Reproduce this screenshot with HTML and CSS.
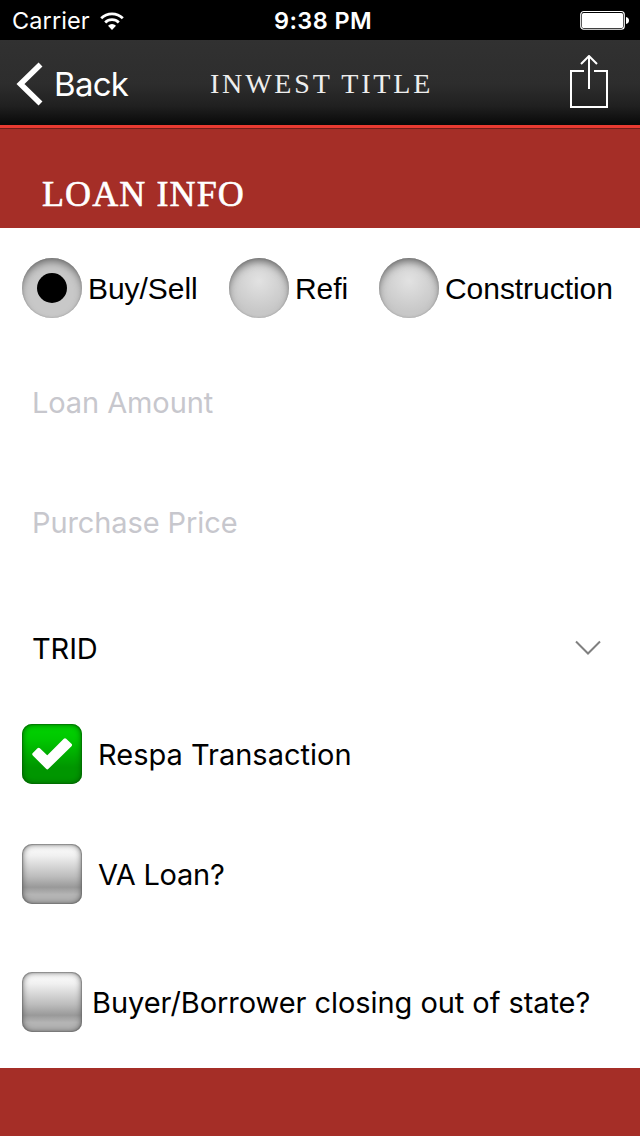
FILE: index.html
```html
<!DOCTYPE html>
<html lang="en">
<head>
<meta charset="utf-8">
<title>Inwest Title</title>
<link rel="stylesheet" href="styles.css">
</head>
<body>
<div class="status">
  <div class="carrier"><span>Carrier</span>
    <svg class="wifi" width="24" height="18" viewBox="0 0 24 18" fill="none" stroke="#fff" stroke-width="2.800"><path d="M1.200 6.200a15.600 15.600 0 0 1 21.600 0M5.200 10.400a9.800 9.800 0 0 1 13.600 0"/><path d="M8 13.700a5.800 5.800 0 0 1 8 0L12 18z" fill="#fff" stroke="none"/></svg>
  </div>
  <time class="clock">9:38 PM</time>
  <svg class="battery" width="50" height="20" viewBox="0 0 50 20"><rect x=".75" y="1.500" width="43.500" height="17.750" rx="3" fill="none" stroke="#fff" stroke-width="1.200"/><rect x="2" y="3" width="41" height="15" rx="1.500" fill="#fff"/><path d="M46 7c4 .5 4 6.500 0 7z" fill="#fff"/></svg>
</div>
<header class="nav">
  <a class="back"><svg width="27" height="44" viewBox="0 0 27 44" fill="none" stroke="#fff" stroke-width="5.600"><path d="M24.500 2.500L4.500 22l20 19.500"/></svg><span>Back</span></a>
  <h1 class="title">INWEST TITLE</h1>
  <svg class="share" width="40" height="54" viewBox="0 0 40 54" fill="none" stroke="#fff" stroke-width="2"><path d="M14 16H1v36h36V16H24M19 34V2M11 9l8-8 8 8"/></svg>
</header>
<section class="banner"><h2>LOAN INFO</h2></section>
<main class="form">
  <div class="radios">
    <label class="radio buy"><i class="knob on"></i><span>Buy/Sell</span></label>
    <label class="radio refi"><i class="knob"></i><span>Refi</span></label>
    <label class="radio construction"><i class="knob"></i><span>Construction</span></label>
  </div>
  <div class="field amount"><span>Loan Amount</span></div>
  <div class="field price"><span>Purchase Price</span></div>
  <div class="field select"><span>TRID</span><svg width="26" height="16" viewBox="0 0 26 16" fill="none" stroke="#808080" stroke-width="2"><path d="M1 1.500l12 12 12-12"/></svg></div>
  <label class="check respa"><i class="box checked"><svg width="60" height="60" viewBox="0 0 60 60"><path d="M12 30.300L16.700 25.500 25.300 33.700 43 16 48.300 21 25.300 43.600z" fill="#fff" stroke="#fff" stroke-width="3.400" stroke-linejoin="round"/></svg></i><span>Respa Transaction</span></label>
  <label class="check va"><i class="box"></i><span>VA Loan?</span></label>
  <label class="check state"><i class="box"></i><span>Buyer/Borrower closing out of state?</span></label>
</main>
<footer class="footer"></footer>
</body>
</html>
```

FILE: styles.css
```css
* { box-sizing: border-box; }
body { margin: 0; width: 640px; height: 1136px; display: flex; flex-direction: column; background: #fff; color: #000; font-family: Inter, "Liberation Sans", sans-serif; overflow: hidden; }
svg { display: block; flex: none; }
span, time { white-space: nowrap; }
h1, h2 { margin: 0; font-family: "Liberation Serif", serif; font-weight: 400; white-space: nowrap; }

.status { height: 40px; flex: none; background: #000; color: #fff; display: grid; grid-template-columns: 242px 1fr 238px; align-items: center; padding: 1px 10px 0 12px; font-size: 23.5px; line-height: 39px; }
.carrier { display: flex; align-items: center; gap: 10px; letter-spacing: .1px; }
.clock { text-align: center; font-weight: 600; letter-spacing: .4px; }
.battery { justify-self: end; margin-top: -1px; }

.nav { height: 89px; flex: none; display: grid; grid-template-columns: 210px 1fr 40px; padding: 0 30px 0 0; background: linear-gradient(#313131, #2d2d2d 50%, #202020 75%, #050505); border-bottom: 1px solid #6f1d1b; box-shadow: inset 0 -3px #e93a31; color: #fff; }
.back { display: flex; align-items: center; height: 88px; padding-left: 16px; gap: 11px; font-size: 33px; letter-spacing: -.7px; }
.title { font-size: 28px; line-height: 88px; letter-spacing: 2.8px; color: #eee; }
.share { margin-top: 15px; }

.banner { height: 99px; flex: none; background: #a52e27; color: #fff; padding: 44px 0 0 42px; }
.banner h2 { font-size: 36px; line-height: 42px; letter-spacing: 1.1px; -webkit-text-stroke: .6px #fff; }

.form { height: 840px; flex: none; padding-top: 30px; }
.radios { height: 60px; display: flex; padding-left: 22px; font-family: "Liberation Sans", sans-serif; font-size: 30px; letter-spacing: -.05px; }
.radio { display: flex; align-items: center; gap: 6px; }
.radio span { padding-top: 2px; }
.buy { width: 207px; }
.refi { width: 150px; }
.knob { width: 60px; height: 60px; flex: none; border-radius: 50%; display: grid; place-items: center; background: radial-gradient(circle at 50% 38%, #e2e2e2, #c8c8c8 65%); box-shadow: inset 0 5px 8px -2px #666, inset 0 0 2px #999; }
.on { background: #c8c8c8; }
.on::before { content: ""; width: 30px; height: 30px; border-radius: 50%; background: #000; }

.field { height: 60px; display: flex; align-items: center; padding-left: 32px; font-size: 29px; color: #c7c7cd; letter-spacing: -.1px; }
.amount { margin-top: 54px; }
.price { margin-top: 60px; }
.select { margin-top: 66px; color: #000; justify-content: space-between; padding-right: 39px; }

.check { display: flex; align-items: center; height: 60px; padding-left: 22px; gap: 16px; font-size: 29px; }
.respa { margin-top: 46px; }
.va { margin-top: 60px; letter-spacing: -.25px; }
.state { margin-top: 68px; gap: 10px; letter-spacing: -.06px; }
.box { width: 60px; height: 60px; flex: none; border-radius: 10px; background: linear-gradient(#fff, #f0f0f0 20%, #bbb 55%, #999 72%, #b4b4b4 84%, #b4b4b4); box-shadow: inset 0 0 6px #555, inset 0 0 1px 1px #77777788; }
.checked { background: linear-gradient(#00d400, #00c800 25%, #009600 72%, #009600); box-shadow: inset 0 0 6px #005a00, inset 0 0 1px 1px #00660088; }

.footer { flex: 1; background: #a52e27; }
```
